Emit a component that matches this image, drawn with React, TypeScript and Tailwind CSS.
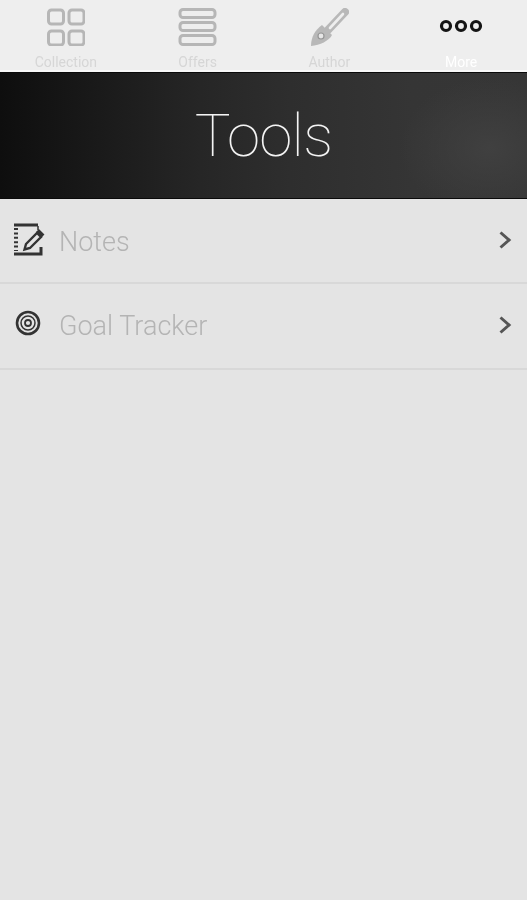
import React from "react";

function Tab({ label, labelClass, children }: { label: string; labelClass: string; children: React.ReactNode }) {
  return (
    <div className="flex flex-1 flex-col items-center">
      <div className="flex h-[54px] items-center justify-center">{children}</div>
      <span className={`text-[14px] leading-[16px] blur-[0.6px] ${labelClass}`}>{label}</span>
    </div>
  );
}

function Row({
  label,
  icon,
  h,
  textClass,
  chevronClass,
}: {
  label: string;
  icon: React.ReactNode;
  h: string;
  textClass: string;
  chevronClass: string;
}) {
  return (
    <div className={`flex items-center border-b-2 border-[#d8d8d8] pl-[13px] pr-[14px] ${h}`}>
      <div className="flex h-[40px] w-[46px] shrink-0 items-start pt-[1px]">{icon}</div>
      <span className={`flex-1 text-[27px] font-light leading-[32px] text-[#b4b4b4] blur-[0.5px] ${textClass}`}>{label}</span>
      <svg width="14" height="20" viewBox="0 0 14 20" fill="none" className={`ml-[-1px] mr-[1px] blur-[0.5px] ${chevronClass}`}>
        <path d="M2.5 2.5 L11 10 L2.5 17.5" stroke="#555" strokeWidth="3" />
      </svg>
    </div>
  );
}

export default function App() {
  return (
    <div
      className="flex h-[900px] w-[527px] flex-col overflow-hidden bg-[#e4e4e4]"
      style={{ fontFamily: "Roboto, 'Liberation Sans', sans-serif" }}
    >
      <div className="flex h-[70px] shrink-0 bg-[#eeeeee]">
        <Tab label="Collection" labelClass="text-[#d6d6d6]">
          <svg width="38" height="38" viewBox="0 0 38 38" fill="none" stroke="#b6b6b6" strokeWidth="3" className="mt-[-1px] blur-[0.6px]">
            <rect x="1.5" y="2" width="15" height="14" rx="3" />
            <rect x="22" y="2" width="15" height="14" rx="3" />
            <rect x="1.5" y="23" width="15" height="14" rx="3" />
            <rect x="22" y="23" width="15" height="14" rx="3" />
          </svg>
        </Tab>
        <Tab label="Offers" labelClass="text-[#d6d6d6]">
          <svg width="39" height="38" viewBox="0 0 39 38" fill="none" stroke="#b6b6b6" strokeWidth="3" className="mt-[-1px] blur-[0.6px]">
            <rect x="2" y="1.5" width="35" height="8" rx="3" />
            <rect x="2" y="14.5" width="35" height="8" rx="3" />
            <rect x="2" y="27.5" width="35" height="9" rx="3" />
          </svg>
        </Tab>
        <Tab label="Author" labelClass="text-[#d6d6d6]">
          <svg width="44" height="44" viewBox="0 0 44 44" fill="none" className="mt-[-1px] blur-[0.6px]">
            <path d="M38 7 L21 25" stroke="#b8b8b8" strokeWidth="8" strokeLinecap="round" />
            <path d="M15 20 L25 30 C22 36 13 40 4 41 C4 32 8 25 15 20 Z" fill="#b8b8b8" />
            <path d="M36 9 L23 23" stroke="#eeeeee" strokeWidth="2.6" strokeLinecap="round" />
            <circle cx="14" cy="31" r="3" fill="#e6e6e6" stroke="#969696" strokeWidth="1.2" />
          </svg>
        </Tab>
        <Tab label="More" labelClass="text-white">
          <svg width="44" height="16" viewBox="0 0 44 16" fill="none" stroke="#141414" strokeWidth="3.2" className="mt-[-2px] blur-[0.4px]">
            <circle cx="7" cy="8" r="4.5" />
            <circle cx="22" cy="8" r="4.5" />
            <circle cx="37" cy="8" r="4.5" />
          </svg>
        </Tab>
      </div>
      <div className="h-[2px] shrink-0 bg-[#f8f8f8]" />
      <div className="flex h-[127px] shrink-0 items-center justify-center border-y border-[#0a0a0a] bg-[radial-gradient(ellipse_90px_70px_at_93%_60%,#404040_0%,rgba(64,64,64,0)_100%),linear-gradient(to_right,#0e0e0e_0%,#1c1c1c_22%,#262626_38%,#2e2e2e_55%,#353535_78%,#363636_100%)]">
        <span className="text-[60px] font-thin leading-none tracking-[-0.7px] text-[#f4f4f4] blur-[0.25px]">Tools</span>
      </div>
      <Row
        h="h-[85px]"
        label="Notes"
        textClass="mt-[2px]"
        chevronClass="mt-[-1px]"
        icon={
          <svg width="32" height="34" viewBox="0 0 32 34" fill="none" stroke="#333333" className="blur-[0.4px]">
            <path d="M1 3 H25" strokeWidth="3" />
            <path d="M1 32 H28 V25" strokeWidth="3" />
            <path d="M3 6 V29" strokeWidth="4" strokeDasharray="2 2.4" />
            <path d="M25 4 V8" strokeWidth="1.5" />
            <path d="M24 11 L28 15 L17 26 L11.5 27.5 L13 22 Z" strokeWidth="2.4" fill="#e4e4e4" />
            <path d="M24.5 8.5 L30 14" strokeWidth="4" />
          </svg>
        }
      />
      <Row
        h="h-[86px]"
        label="Goal Tracker"
        textClass="mt-[0px]"
        chevronClass="mt-[-3px]"
        icon={
          <svg width="26" height="26" viewBox="0 0 26 26" fill="none" stroke="#333333" className="mt-[3px] ml-[2px] blur-[0.4px]">
            <circle cx="13" cy="13" r="11" strokeWidth="2.6" />
            <circle cx="13" cy="13" r="7" strokeWidth="1.5" />
            <circle cx="13" cy="13" r="3" strokeWidth="1.8" />
          </svg>
        }
      />
    </div>
  );
}
